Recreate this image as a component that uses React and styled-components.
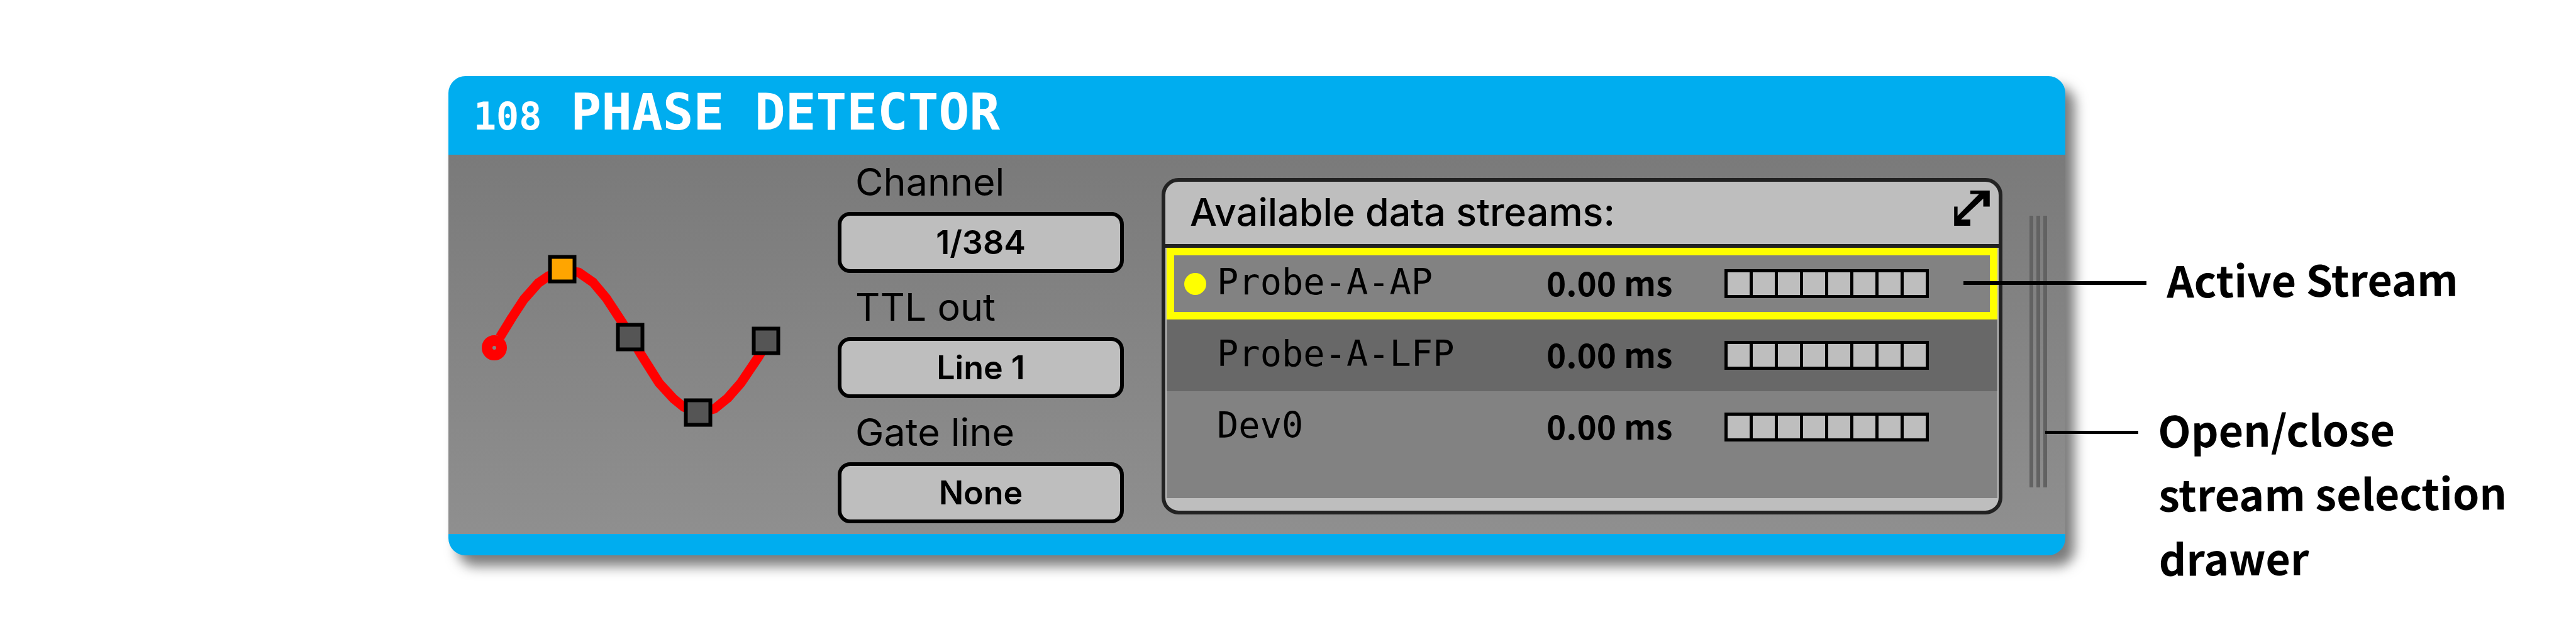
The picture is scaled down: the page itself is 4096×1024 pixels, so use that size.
import React from "react";
import styled, { createGlobalStyle } from "styled-components";

const UI_FONT = `Inter, "Liberation Sans", sans-serif`;
const MONO_FONT = `"DejaVu Sans Mono", monospace`;
const NOTE_FONT = `"Noto Sans CJK JP", "Noto Sans", sans-serif`;

const GlobalStyle = createGlobalStyle`
  *, *::before, *::after { box-sizing: border-box; }
  body { margin: 0; background: #fff; color: #000; font-family: ${UI_FONT}; }
`;

const Page = styled.main`
  display: flex;
  align-items: flex-start;
  padding: 121px 0 72px 713px;
`;

const Editor = styled.section`
  flex: 1;
  min-width: 0;
  border-radius: 27px;
  background: #00adef;
  box-shadow: 15px 17px 20px rgba(0, 0, 0, 0.52);
`;

const TitleBar = styled.header`
  display: flex;
  align-items: baseline;
  gap: 46px;
  height: 125px;
  padding: 11px 40px 0;
  color: #fff;
`;

const NodeId = styled.span`
  font: 700 60px/92px ${MONO_FONT};
`;

const Title = styled.h1`
  margin: 0;
  font: 700 81px/92px ${MONO_FONT};
`;

const Body = styled.div`
  display: flex;
  align-items: flex-start;
  height: 603px;
  padding: 0 29px 0 53px;
  background: linear-gradient(#7a7a7a, #8f8f8f);
`;

const Footer = styled.footer`
  height: 34px;
`;

const Wave = styled.svg`
  flex: none;
  width: 475px;
  height: 284px;
  margin-top: 154px;
`;

const Controls = styled.div`
  flex: none;
  display: flex;
  flex-direction: column;
  gap: 16px;
  width: 455px;
  margin: 5px 60px 0 91px;
`;

const Field = styled.div`
  display: flex;
  flex-direction: column;
  gap: 10px;
`;

const FieldLabel = styled.label`
  padding-left: 28px;
  font: 400 61px/76px ${UI_FONT};
`;

const Control = styled.button`
  appearance: none;
  width: 100%;
  height: 97px;
  padding: 0;
  border: 6px solid #000;
  border-radius: 20px;
  background: #bebebe;
  color: #000;
  font: 600 52px/66px ${UI_FONT};
  text-align: center;
  text-align-last: center;
`;

const StreamPanel = styled.section`
  flex: 1;
  min-width: 0;
  display: flex;
  flex-direction: column;
  height: 535px;
  margin: 37px 43px 0 0;
  border: 6px solid #222;
  border-radius: 27px;
  background: #bebebe;
  overflow: hidden;
`;

const StreamHeader = styled.div`
  display: flex;
  justify-content: space-between;
  align-items: flex-start;
  height: 105px;
  padding: 10px 14px 0 39px;
  border-bottom: 6px solid #222;
`;

const StreamHeading = styled.h2`
  margin: 0;
  font: 500 61px/76px ${UI_FONT};
`;

const ExpandButton = styled.button`
  padding: 4px 0;
  border: 0;
  background: none;
  svg { display: block; width: 57px; height: 56px; }
`;

const StreamList = styled.div`
  flex: 1;
  margin: 0 2px 20px;
  background: #828282;
`;

const StreamTable = styled.table`
  width: 100%;
  table-layout: fixed;
  border-collapse: collapse;
`;

const StreamRow = styled.tr`
  height: 114px;
  background: ${(p) => (p.$shaded ? "#686868" : "#828282")};
  outline: ${(p) => (p.$active ? "12px solid #ff0" : "none")};
  outline-offset: -12px;
`;

const NameCell = styled.td`
  width: 604px;
  padding: 0 0 0 28px;
`;

const StreamName = styled.div`
  display: flex;
  align-items: center;
  gap: 17px;
`;

const NameText = styled.span`
  padding-bottom: 6px;
  font: 400 57px/66px ${MONO_FONT};
`;

const ActiveDot = styled.span`
  width: 35px;
  height: 35px;
  border-radius: 50%;
  background: ${(p) => (p.$on ? "#ff0" : "transparent")};
`;

const DelayCell = styled.td`
  width: 283px;
  padding: 0 0 6px;
  font: 700 53px/66px ${NOTE_FONT};
`;

const LinesCell = styled.td`
  padding: 0;
`;

const LineStrip = styled.div`
  display: flex;
  gap: 5px;
  width: 325px;
  height: 46px;
  padding: 5px;
  background: #000;
`;

const LineCell = styled.span`
  flex: 1;
  background: #bebebe;
`;

const DrawerHandle = styled.button`
  flex: none;
  display: flex;
  gap: 5px;
  height: 432px;
  margin-top: 97px;
  padding: 0;
  border: 0;
  background: none;
`;

const Grip = styled.span`
  width: 6px;
  height: 100%;
  background: #626262;
`;

const Notes = styled.aside`
  position: relative;
  flex: none;
  display: flex;
  flex-direction: column;
  gap: 136px;
  width: 974px;
  margin: 271px 0 0 -162px;
  pointer-events: none;
`;

const Note = styled.div`
  display: flex;
  align-items: flex-start;
  gap: 32px;
  padding-left: ${(p) => p.$indent}px;
`;

const Leader = styled.span`
  flex: none;
  width: ${(p) => p.$length}px;
  height: ${(p) => p.$weight}px;
  margin-top: 55px;
  background: #000;
`;

const NoteText = styled.p`
  margin: 0;
  font: 700 68px/102px ${NOTE_FONT};
  transform: rotate(-0.35deg);
`;

const WAVE_POINTS =
  "29,136 48,105 67,76 90,50 106,39 128,30 154,33 177,49 198,74 223,112 236,135 251,160 263,179 282,209 305,234 321,247 344,256 370,250 391,233 412,209 439,169 453,146";

const PHASES = [
  { name: "peak", x: 128, y: 28, fill: "#ffa500" },
  { name: "falling", x: 236, y: 136, fill: "#555" },
  { name: "trough", x: 344, y: 256, fill: "#555" },
  { name: "rising", x: 452, y: 142, fill: "#555" },
];

const STREAMS = [
  { name: "Probe-A-AP", delay: "0.00 ms", active: true },
  { name: "Probe-A-LFP", delay: "0.00 ms", shaded: true },
  { name: "Dev0", delay: "0.00 ms" },
];

function PhaseWave() {
  return (
    <Wave viewBox="0 0 475 284" aria-label="Phase selector">
      <polyline points={WAVE_POINTS} fill="none" stroke="#f00" strokeWidth="15" strokeLinejoin="round" />
      <circle cx="20" cy="153" r="11.5" fill="none" stroke="#f00" strokeWidth="17" />
      {PHASES.map((p) => (
        <rect key={p.name} x={p.x - 19.5} y={p.y - 19.5} width="39" height="39" fill={p.fill} stroke="#000" strokeWidth="6" />
      ))}
    </Wave>
  );
}

function StreamSelector() {
  return (
    <StreamPanel>
      <StreamHeader>
        <StreamHeading>Available data streams:</StreamHeading>
        <ExpandButton type="button" aria-label="Expand">
          <svg viewBox="0 0 187 185">
            <path d="M85 0H187V84H153V42L36 152H85V185H0V84H18V133L131 18H85Z" />
          </svg>
        </ExpandButton>
      </StreamHeader>
      <StreamList>
        <StreamTable>
          <tbody>
            {STREAMS.map((s) => (
              <StreamRow key={s.name} $active={s.active} $shaded={s.shaded}>
                <NameCell>
                  <StreamName>
                    <ActiveDot $on={s.active} />
                    <NameText>{s.name}</NameText>
                  </StreamName>
                </NameCell>
                <DelayCell>{s.delay}</DelayCell>
                <LinesCell>
                  <LineStrip>
                    {Array.from({ length: 8 }, (_, i) => (
                      <LineCell key={i} />
                    ))}
                  </LineStrip>
                </LinesCell>
              </StreamRow>
            ))}
          </tbody>
        </StreamTable>
      </StreamList>
    </StreamPanel>
  );
}

export default function App() {
  return (
    <>
      <GlobalStyle />
      <Page>
        <Editor>
          <TitleBar>
            <NodeId>108</NodeId>
            <Title>PHASE DETECTOR</Title>
          </TitleBar>
          <Body>
            <PhaseWave />
            <Controls>
              <Field>
                <FieldLabel htmlFor="channel">Channel</FieldLabel>
                <Control id="channel" type="button">1/384</Control>
              </Field>
              <Field>
                <FieldLabel htmlFor="ttl-out">TTL out</FieldLabel>
                <Control as="select" id="ttl-out" defaultValue="Line 1">
                  <option>Line 1</option>
                </Control>
              </Field>
              <Field>
                <FieldLabel htmlFor="gate-line">Gate line</FieldLabel>
                <Control as="select" id="gate-line" defaultValue="None">
                  <option>None</option>
                </Control>
              </Field>
            </Controls>
            <StreamSelector />
            <DrawerHandle type="button" aria-label="Stream selection drawer">
              <Grip />
              <Grip />
              <Grip />
            </DrawerHandle>
          </Body>
          <Footer />
        </Editor>
        <Notes>
          <Note $indent={0}>
            <Leader $length={291} $weight={6} />
            <NoteText>Active Stream</NoteText>
          </Note>
          <Note $indent={130}>
            <Leader $length={148} $weight={5} />
            <NoteText>
              Open/close
              <br />
              stream selection
              <br />
              drawer
            </NoteText>
          </Note>
        </Notes>
      </Page>
    </>
  );
}
